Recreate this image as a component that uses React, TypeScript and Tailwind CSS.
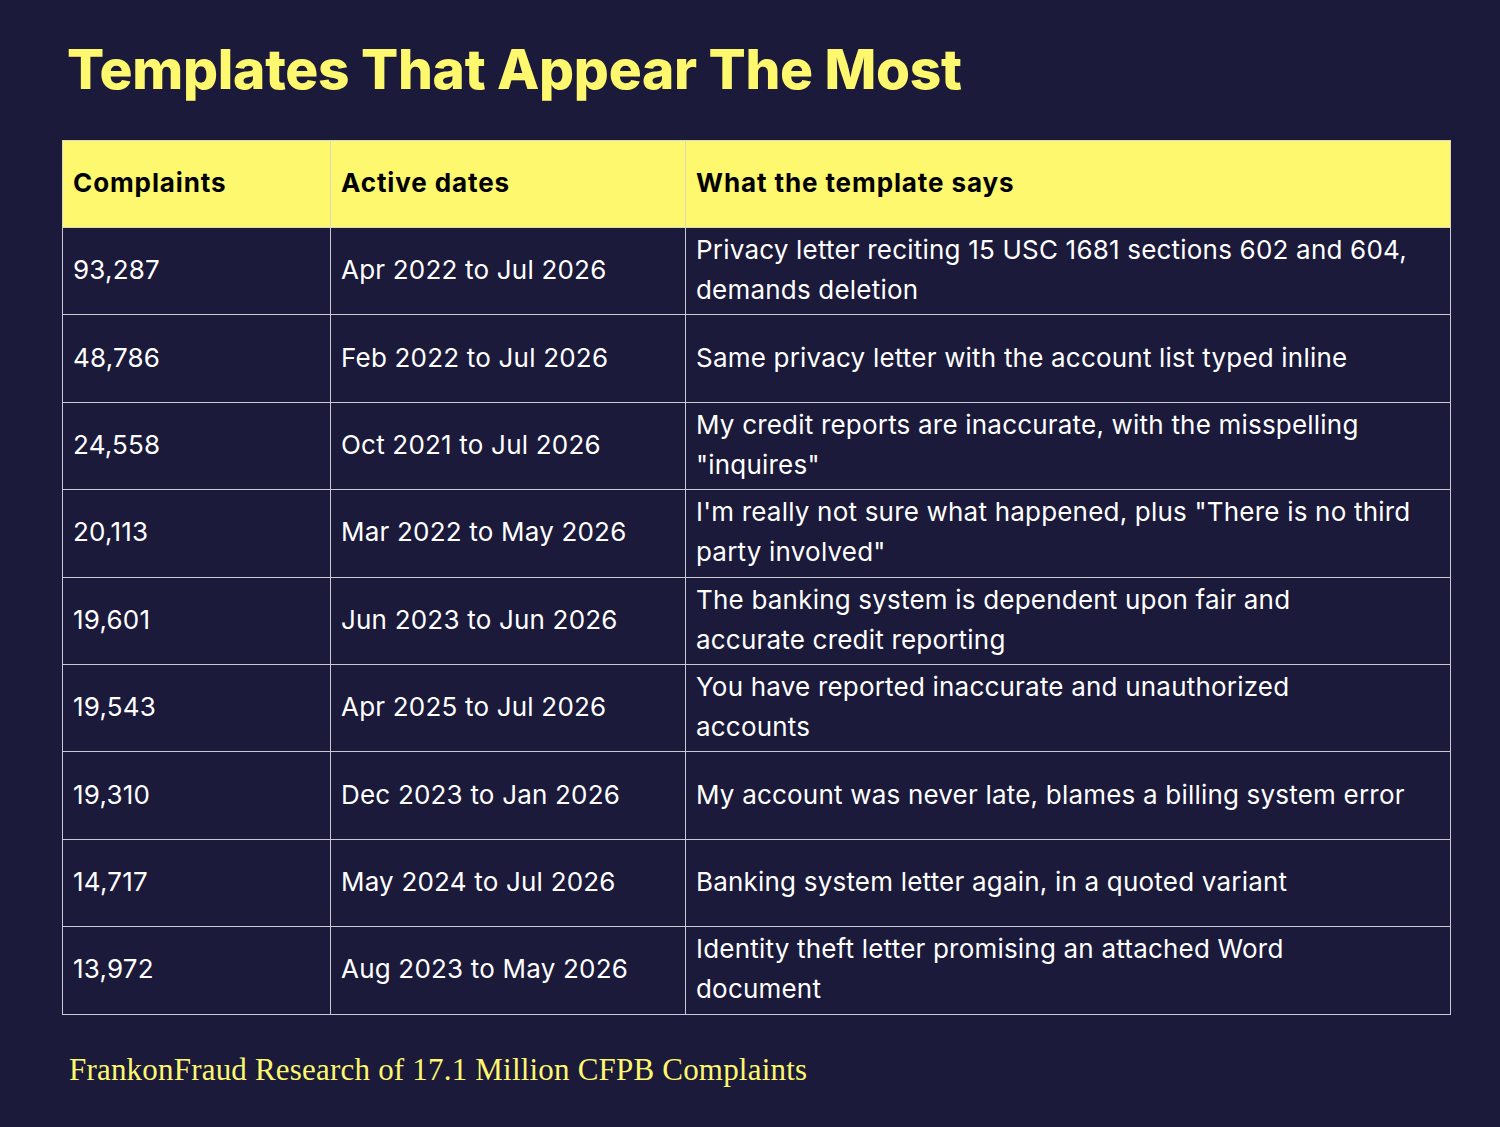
import React from "react";

const rows: [string, string, string[]][] = [
  ["93,287", "Apr 2022 to Jul 2026", ["Privacy letter reciting 15 USC 1681 sections 602 and 604,", "demands deletion"]],
  ["48,786", "Feb 2022 to Jul 2026", ["Same privacy letter with the account list typed inline"]],
  ["24,558", "Oct 2021 to Jul 2026", ["My credit reports are inaccurate, with the misspelling", '"inquires"']],
  ["20,113", "Mar 2022 to May 2026", ['I\'m really not sure what happened, plus "There is no third', 'party involved"']],
  ["19,601", "Jun 2023 to Jun 2026", ["The banking system is dependent upon fair and", "accurate credit reporting"]],
  ["19,543", "Apr 2025 to Jul 2026", ["You have reported inaccurate and unauthorized", "accounts"]],
  ["19,310", "Dec 2023 to Jan 2026", ["My account was never late, blames a billing system error"]],
  ["14,717", "May 2024 to Jul 2026", ["Banking system letter again, in a quoted variant"]],
  ["13,972", "Aug 2023 to May 2026", ["Identity theft letter promising an attached Word", "document"]],
];

export default function App() {
  return (
    <div className="min-h-screen w-[1500px] h-[1127px] bg-[#1b1a3a] px-[62px] pt-[36px] font-['Inter',sans-serif]">
      <h1 className="text-[#fdf86e] text-[55px] font-extrabold leading-[66px] pl-[5px] tracking-[-0.3px]">
        Templates That Appear The Most
      </h1>
      <table className="mt-[38px] w-[1389px] border-collapse text-[26px] tracking-[0.2px] text-white">
        <thead>
          <tr className="bg-[#fdf86e] text-black h-[87px] tracking-[0.9px]">
            <th className="w-[268px] border border-[#d8d8c0] text-left font-bold px-[10px] pb-[3px]">Complaints</th>
            <th className="w-[355px] border border-[#d8d8c0] text-left font-bold px-[10px] pb-[3px]">Active dates</th>
            <th className="border border-[#d8d8c0] text-left font-bold px-[10px] pb-[3px]">What the template says</th>
          </tr>
        </thead>
        <tbody>
          {rows.map((r) => (
            <tr key={r[0]} className="h-[87.4px]">
              <td className="border border-[#c9c9d2] px-[10px] pb-[3px] align-middle">{r[0]}</td>
              <td className="border border-[#c9c9d2] px-[10px] pb-[3px] align-middle">{r[1]}</td>
              <td className="border border-[#c9c9d2] px-[10px] pb-[2px] align-middle leading-[40px] whitespace-nowrap">
                {r[2].map((line, i) => (
                  <div key={i}>{line}</div>
                ))}
              </td>
            </tr>
          ))}
        </tbody>
      </table>
      <p className="mt-[32px] pl-[7px] text-[#fdf86e] text-[31px] tracking-[0.2px] font-['Liberation_Serif',serif]">
        FrankonFraud Research of 17.1 Million CFPB Complaints
      </p>
    </div>
  );
}
